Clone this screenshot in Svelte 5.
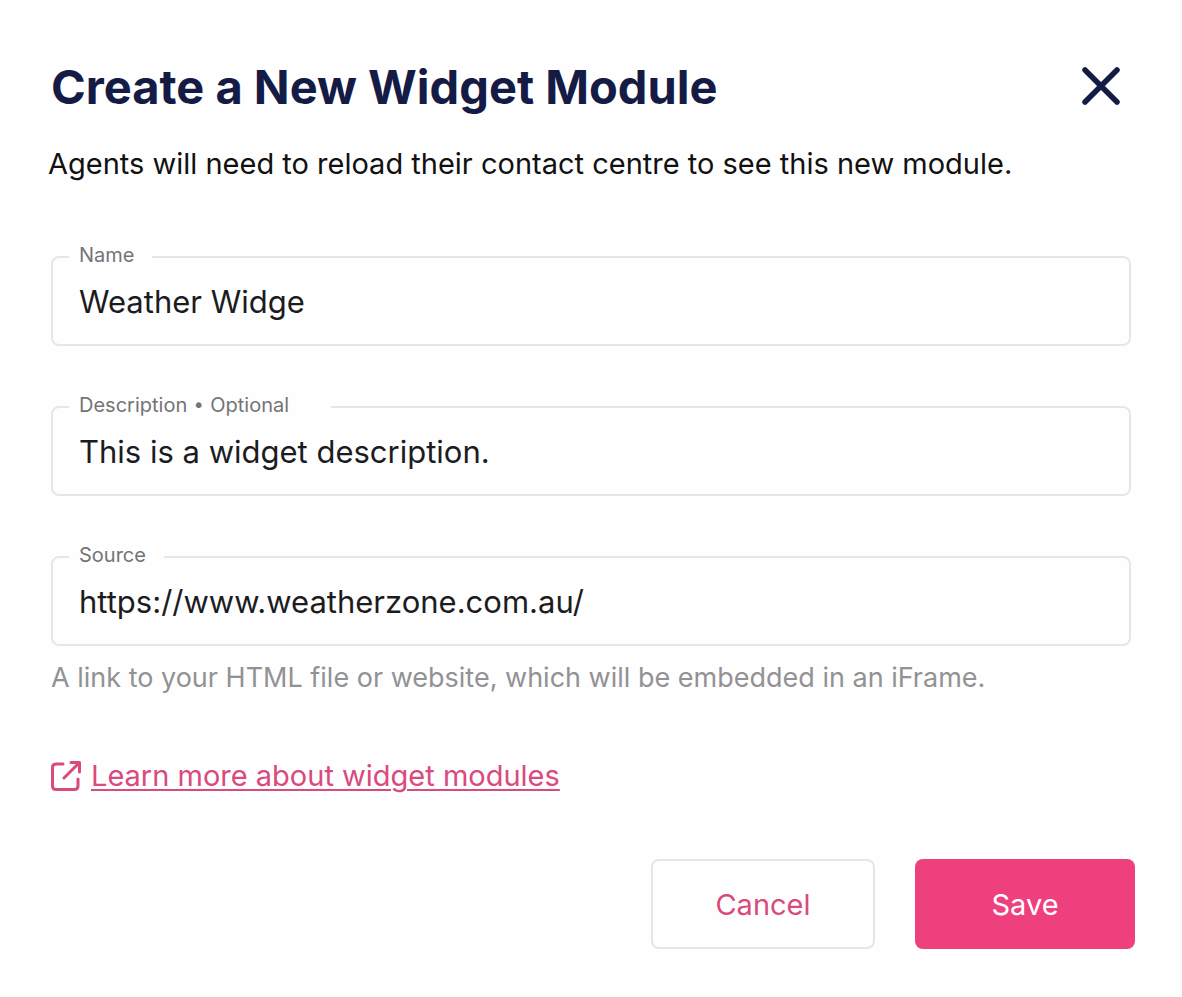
<script>
  let name = $state('Weather Widge');
  let description = $state('This is a widget description.');
  let source = $state('https://www.weatherzone.com.au/');
</script>

<main>
  <header>
    <h1>Create a New Widget Module</h1>
    <button class="close" type="button" aria-label="Close">
      <svg width="40" height="40" viewBox="0 0 40 40" fill="none" stroke="currentColor" stroke-width="5.5" stroke-linecap="round"><path d="M4 3 36 35M36 3 4 35" /></svg>
    </button>
  </header>
  <p class="intro">Agents will need to reload their contact centre to see this new module.</p>

  <form>
    <div class="field">
      <label for="name">Name</label>
      <input id="name" type="text" bind:value={name} />
    </div>
    <div class="field optional">
      <label for="description">Description <span class="dot">•</span> Optional</label>
      <input id="description" type="text" bind:value={description} />
    </div>
    <div class="field source">
      <label for="source">Source</label>
      <input id="source" type="text" bind:value={source} aria-describedby="source-hint" />
    </div>
    <p class="hint" id="source-hint">A link to your HTML file or website, which will be embedded in an iFrame.</p>

    <a class="learn" href="#learn">
      <svg width="30" height="30" viewBox="0 0 30 30" fill="none" stroke="currentColor" stroke-width="3" stroke-linecap="round" stroke-linejoin="round"><path d="M12 3H5Q1.500 3 1.500 6.500V25Q1.500 28.500 5 28.500H23.500Q27 28.500 27 25V18M20 1.500H28.500V11M28 2 13 17" /></svg>
      <span>Learn more about widget modules</span>
    </a>

    <div class="actions">
      <button class="cancel" type="button">Cancel</button>
      <button class="save" type="button">Save</button>
    </div>
  </form>
</main>

<style>
  :global(body) { margin: 0; background: #fefefe; }
  main {
    box-sizing: border-box;
    padding: 55px 47px 48px 51px;
    font-family: Inter, sans-serif;
    color: #1c1c1e;
  }
  header { display: flex; align-items: center; justify-content: space-between; padding-right: 14px; }
  h1 { margin: 0; font-size: 47px; line-height: 64px; font-weight: 700; color: #141b45; }
  button { font-family: inherit; cursor: pointer; }
  .close { width: 40px; height: 40px; padding: 0; border: 0; background: none; color: #141b45; }
  svg { display: block; flex: none; }
  .intro { margin: 25px 0 72px -3px; font-size: 29px; line-height: 40px; color: #111; }
  .field { position: relative; margin-bottom: 60px; margin-right: 4px; }
  .field label {
    position: absolute; top: -13px; left: 18px; padding: 0 18px 0 10px;
    font-size: 20px; line-height: 24px; color: #747476; background: #fefefe;
  }
  .optional label { padding-right: 42px; }
  .dot { font-family: "DejaVu Sans", sans-serif; line-height: 20px; }
  .field input {
    display: block; box-sizing: border-box; width: 100%; height: 90px; padding: 0 26px;
    border: 2px solid #e6e6e6; border-radius: 8px; background: none;
    font-family: inherit; font-size: 31px; color: inherit; outline: none;
  }
  .field.source { margin-bottom: 12px; }
  .hint { margin: 0 0 60px; font-size: 27px; line-height: 40px; color: #929295; }
  .learn {
    display: flex; width: fit-content; align-items: center; gap: 10px;
    font-size: 29px; line-height: 36px; color: #d94a7e; text-decoration: none;
  }
  .learn span { text-decoration: underline 2px; text-underline-offset: 3px; }
  .actions { display: flex; justify-content: flex-end; gap: 40px; margin-top: 65px; }
  .actions button { height: 90px; border-radius: 8px; font-size: 29px; }
  .cancel { width: 224px; border: 2px solid #e6e6e6; background: #fefefe; color: #d94a7e; }
  .save { width: 220px; border: 0; background: #ee3f7e; color: #fff; }
</style>
